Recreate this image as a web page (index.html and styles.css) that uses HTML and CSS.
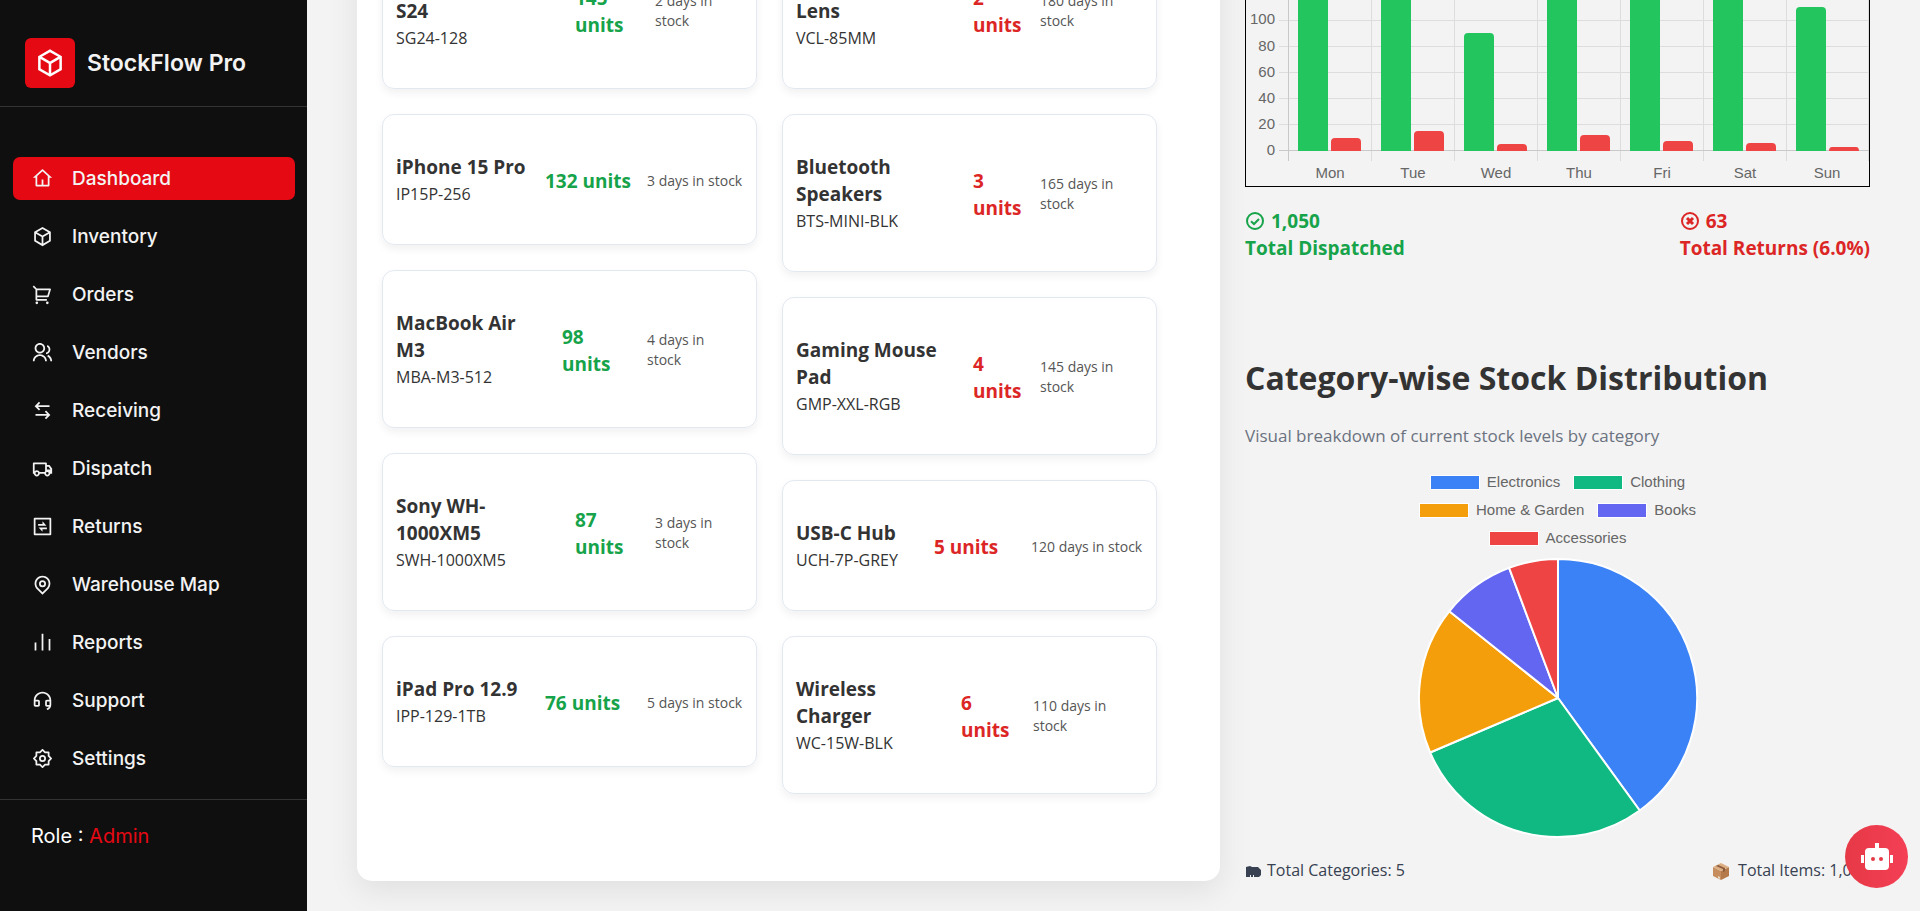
FILE: index.html
```html
<!DOCTYPE html>
<html lang="en">
<head>
<meta charset="utf-8">
<title>StockFlow Pro</title>
<link rel="stylesheet" href="styles.css">
</head>
<body>
<div class="app">
  <aside class="sidebar">
    <div class="brand">
      <span class="brand-mark"><svg class="brand-icon" viewBox="0 0 24 24"><path d="M12 1L21.5 6.5V17.5L12 23L2.5 17.5V6.5L12 1ZM5.494 7.078L12 10.844L18.506 7.078L12 3.311L5.494 7.078ZM4.5 8.813V16.347L11 20.11V12.577L4.5 8.813ZM13 20.11L19.5 16.347V8.813L13 12.577V20.11Z"/></svg></span>
      <span class="brand-name">StockFlow Pro</span>
    </div>
    <nav class="nav">
      <a class="nav-item active" href="#"><svg class="nav-icon" viewBox="0 0 24 24"><path d="M19 21H5C4.448 21 4 20.552 4 20V11H1L11.327 1.612C11.709 1.265 12.291 1.265 12.673 1.612L23 11H20V20C20 20.552 19.552 21 19 21ZM13 19H18V9.157L12 3.703L6 9.157V19H11V13H13V19Z"/></svg>Dashboard</a>
      <a class="nav-item" href="#"><svg class="nav-icon" viewBox="0 0 24 24"><path d="M12 1L21.5 6.5V17.5L12 23L2.5 17.5V6.5L12 1ZM5.494 7.078L12 10.844L18.506 7.078L12 3.311L5.494 7.078ZM4.5 8.813V16.347L11 20.11V12.577L4.5 8.813ZM13 20.11L19.5 16.347V8.813L13 12.577V20.11Z"/></svg>Inventory</a>
      <a class="nav-item" href="#"><svg class="nav-icon" viewBox="0 0 24 24"><path d="M4.004 6.417L.762 3.174L2.176 1.76L5.419 5.003H20.66C21.213 5.003 21.66 5.45 21.66 6.003C21.66 6.1 21.646 6.197 21.618 6.29L19.218 14.29C19.091 14.713 18.702 15.003 18.26 15.003H6.004V17.003H17.004V19.003H5.004C4.452 19.003 4.004 18.555 4.004 18.003V6.417ZM6.004 7.003V13.003H17.516L19.316 7.003H6.004Z"/><circle cx="5.5" cy="21.5" r="1.5"/><circle cx="17.5" cy="21.5" r="1.5"/></svg>Orders</a>
      <a class="nav-item" href="#"><svg class="nav-icon" viewBox="0 0 24 24"><path d="M1 22C1 17.582 4.582 14 9 14C13.418 14 17 17.582 17 22H15C15 18.686 12.314 16 9 16C5.686 16 3 18.686 3 22H1ZM9 13C5.685 13 3 10.315 3 7C3 3.685 5.685 1 9 1C12.315 1 15 3.685 15 7C15 10.315 12.315 13 9 13ZM9 11C11.21 11 13 9.21 13 7C13 4.79 11.21 3 9 3C6.79 3 5 4.79 5 7C5 9.21 6.79 11 9 11ZM18.284 14.703C21.064 15.956 23 18.752 23 22H21C21 19.564 19.548 17.467 17.463 16.527L18.284 14.703ZM17.596 3.413C19.594 4.237 21 6.204 21 8.5C21 11.37 18.804 13.725 16 13.978V11.965C17.697 11.722 19 10.264 19 8.5C19 7.119 18.202 5.926 17.041 5.356L17.596 3.413Z"/></svg>Vendors</a>
      <a class="nav-item" href="#"><svg class="nav-icon" viewBox="0 0 24 24"><path d="M16.05 12.05L21 17L16.05 21.95L14.636 20.535L17.172 18H4V16H17.172L14.636 13.464L16.05 12.05ZM7.95 2.05L9.364 3.464L6.828 6H20V8H6.828L9.364 10.535L7.95 11.95L3 7L7.95 2.05Z"/></svg>Receiving</a>
      <a class="nav-item" href="#"><svg class="nav-icon" viewBox="0 0 24 24"><path d="M8.965 18C8.722 19.696 7.263 21 5.5 21C3.737 21 2.278 19.696 2.035 18H1V6C1 5.448 1.448 5 2 5H16C16.552 5 17 5.448 17 6V8H20L23 12.056V18H20.965C20.722 19.696 19.263 21 17.5 21C15.737 21 14.278 19.696 14.035 18H8.965ZM15 7H3V15.05C3.635 14.402 4.521 14 5.5 14C6.896 14 8.101 14.818 8.663 16H14.337C14.505 15.647 14.73 15.326 15 15.05V7ZM17 13H21V12.715L18.992 10H17V13ZM17.5 19A1.5 1.5 0 1 0 17.5 16A1.5 1.5 0 0 0 17.5 19ZM5.5 19A1.5 1.5 0 1 0 5.5 16A1.5 1.5 0 0 0 5.5 19Z"/></svg>Dispatch</a>
      <a class="nav-item" href="#"><svg class="nav-icon" viewBox="0 0 24 24"><path d="M3 2H21C21.552 2 22 2.448 22 3V21C22 21.552 21.552 22 21 22H3C2.448 22 2 21.552 2 21V3C2 2.448 2.448 2 3 2ZM4 4V20H20V4H4ZM12 9V6L16.5 11H7V9H12ZM7.5 13H17V15H12V18L7.5 13Z"/></svg>Returns</a>
      <a class="nav-item" href="#"><svg class="nav-icon" viewBox="0 0 24 24"><path d="M12 20.9L16.95 15.95C19.683 13.216 19.683 8.784 16.95 6.05C14.216 3.317 9.784 3.317 7.05 6.05C4.317 8.784 4.317 13.216 7.05 15.95L12 20.9ZM12 23.728L5.636 17.364C2.121 13.849 2.121 8.151 5.636 4.636C9.151 1.121 14.849 1.121 18.364 4.636C21.879 8.151 21.879 13.849 18.364 17.364L12 23.728ZM12 13A2 2 0 1 0 12 9A2 2 0 0 0 12 13ZM12 15A4 4 0 1 1 12 7A4 4 0 0 1 12 15Z"/></svg>Warehouse Map</a>
      <a class="nav-item" href="#"><svg class="nav-icon" viewBox="0 0 24 24"><path d="M3 12H5V21H3V12ZM19 8H21V21H19V8ZM11 2H13V21H11V2Z"/></svg>Reports</a>
      <a class="nav-item" href="#"><svg class="nav-icon" viewBox="0 0 24 24"><path d="M22 17.002C21.999 19.873 19.982 22.273 17.287 22.862L16.649 20.948C17.853 20.751 18.877 20.017 19.466 19H17C15.895 19 15 18.105 15 17V13C15 11.895 15.895 11 17 11H19.938C19.446 7.054 16.08 4 12 4C7.92 4 4.554 7.054 4.062 11H7C8.105 11 9 11.895 9 13V17C9 18.105 8.105 19 7 19H4C2.895 19 2 18.105 2 17V12C2 6.477 6.477 2 12 2C17.523 2 22 6.477 22 12V17.002ZM20 17V13H17V17H20ZM4 13V17H7V13H4Z"/></svg>Support</a>
      <a class="nav-item" href="#"><svg class="nav-icon" viewBox="0 0 24 24"><path d="M8.686 4L11.293 1.393C11.683 1.003 12.317 1.003 12.707 1.393L15.314 4H19C19.552 4 20 4.448 20 5V8.686L22.607 11.293C22.997 11.683 22.997 12.317 22.607 12.707L20 15.314V19C20 19.552 19.552 20 19 20H15.314L12.707 22.607C12.317 22.997 11.683 22.997 11.293 22.607L8.686 20H5C4.448 20 4 19.552 4 19V15.314L1.393 12.707C1.003 12.317 1.003 11.683 1.393 11.293L4 8.686V5C4 4.448 4.448 4 5 4H8.686ZM6 6V9.515L3.515 12L6 14.485V18H9.515L12 20.485L14.485 18H18V14.485L20.485 12L18 9.515V6H14.485L12 3.515L9.515 6H6ZM12 16A4 4 0 1 1 12 8A4 4 0 0 1 12 16ZM12 14A2 2 0 1 0 12 10A2 2 0 0 0 12 14Z"/></svg>Settings</a>
    </nav>
    <div class="role">Role : <span class="role-name">Admin</span></div>
  </aside>

  <main class="main">
    <div class="content">
      <section class="panel">
        <div class="stock-list fast">
          <article class="item split-wide"><div><h3>Samsung<br>S24</h3><p class="sku">SG24-128</p></div><p class="units">145<br>units</p><p class="days">2 days in<br>stock</p></article>
          <article class="item split-name"><div><h3>iPhone 15 Pro</h3><p class="sku">IP15P-256</p></div><p class="units">132 units</p><p class="days">3 days in stock</p></article>
          <article class="item split-mid"><div><h3>MacBook Air<br>M3</h3><p class="sku">MBA-M3-512</p></div><p class="units">98<br>units</p><p class="days">4 days in<br>stock</p></article>
          <article class="item split-wide"><div><h3>Sony WH-<br>1000XM5</h3><p class="sku">SWH-1000XM5</p></div><p class="units">87<br>units</p><p class="days">3 days in<br>stock</p></article>
          <article class="item split-name"><div><h3>iPad Pro 12.9</h3><p class="sku">IPP-129-1TB</p></div><p class="units">76 units</p><p class="days">5 days in stock</p></article>
        </div>
        <div class="stock-list slow">
          <article class="item split-wide"><div><h3>Camera<br>Lens</h3><p class="sku">VCL-85MM</p></div><p class="units">2<br>units</p><p class="days">180 days in<br>stock</p></article>
          <article class="item split-wide"><div><h3>Bluetooth<br>Speakers</h3><p class="sku">BTS-MINI-BLK</p></div><p class="units">3<br>units</p><p class="days">165 days in<br>stock</p></article>
          <article class="item split-wide"><div><h3>Gaming Mouse<br>Pad</h3><p class="sku">GMP-XXL-RGB</p></div><p class="units">4<br>units</p><p class="days">145 days in<br>stock</p></article>
          <article class="item split-name"><div><h3>USB-C Hub</h3><p class="sku">UCH-7P-GREY</p></div><p class="units">5 units</p><p class="days">120 days in stock</p></article>
          <article class="item split-mid"><div><h3>Wireless<br>Charger</h3><p class="sku">WC-15W-BLK</p></div><p class="units">6<br>units</p><p class="days">110 days in<br>stock</p></article>
        </div>
      </section>

      <section class="insights">
        <svg class="bar-chart" viewBox="0 0 625 312" role="img" aria-label="Dispatched and returned items per day">
          <g class="grid-lines">
            <path d="M34 15.5H624M34 41.5H624M34 67.5H624M34 93.5H624M34 119.5H624M34 145.5H624M34 171.5H624M34 197.5H624M34 223.5H624M34 249.5H624"/>
            <path d="M126.5 15V286M209.5 15V286M292.5 15V286M375.5 15V286M458.5 15V286M541.5 15V286M623.5 15V286"/>
          </g>
          <path class="axis-lines" d="M34 275.5H624M43.5 15V286"/>
          <g class="bar-out">
            <path d="M53 276V80q0-4 4-4h22q4 0 4 4V276zM136 276V60q0-4 4-4h22q4 0 4 4V276zM219 276V162q0-4 4-4h22q4 0 4 4V276zM302 276V50q0-4 4-4h22q4 0 4 4V276zM385 276V40q0-4 4-4h22q4 0 4 4V276zM468 276V70q0-4 4-4h22q4 0 4 4V276zM551 276V136q0-4 4-4h22q4 0 4 4V276z"/>
          </g>
          <g class="bar-back">
            <path d="M86 276V267q0-4 4-4h22q4 0 4 4V276zM169 276V260q0-4 4-4h22q4 0 4 4V276zM252 276V273q0-4 4-4h22q4 0 4 4V276zM335 276V264q0-4 4-4h22q4 0 4 4V276zM418 276V270q0-4 4-4h22q4 0 4 4V276zM501 276V272q0-4 4-4h22q4 0 4 4V276zM584 276q0-4 3-4h24q3 0 3 4z"/>
          </g>
          <g class="chart-text tick-y">
            <text x="30" y="149">100</text><text x="30" y="176">80</text><text x="30" y="202">60</text><text x="30" y="228">40</text><text x="30" y="254">20</text><text x="30" y="280">0</text>
          </g>
          <g class="chart-text tick-x">
            <text x="85" y="303">Mon</text><text x="168" y="303">Tue</text><text x="251" y="303">Wed</text><text x="334" y="303">Thu</text><text x="417" y="303">Fri</text><text x="500" y="303">Sat</text><text x="582" y="303">Sun</text>
          </g>
          <rect class="frame" x="0.5" y="0.5" width="624" height="311"/>
        </svg>

        <div class="totals">
          <p class="total good"><svg class="total-icon" viewBox="0 0 20 20"><circle cx="10" cy="10" r="8"/><path d="M6 10.2L9 13L14 8"/></svg>1,050<br>Total Dispatched</p>
          <p class="total bad"><svg class="total-icon" viewBox="0 0 20 20"><circle cx="10" cy="10" r="8"/><path class="cross" d="M7 7L13 13M13 7L7 13"/></svg>63<br>Total Returns (6.0%)</p>
        </div>

        <h2 class="section-title">Category-wise Stock Distribution</h2>
        <p class="section-note">Visual breakdown of current stock levels by category</p>

        <ul class="legend">
          <li><span class="swatch electronics"></span>Electronics</li>
          <li><span class="swatch clothing"></span>Clothing</li>
          <li><span class="swatch home"></span>Home &amp; Garden</li>
          <li><span class="swatch books"></span>Books</li>
          <li><span class="swatch accessories"></span>Accessories</li>
        </ul>
        <svg class="pie" viewBox="-140 -140 280 280" role="img" aria-label="Stock by category">
          <path class="electronics" d="M0 0V-139A139 139 0 0 1 81.7 112.5Z"/>
          <path class="clothing" d="M0 0L81.7 112.5A139 139 0 0 1 -127.9 54.5Z"/>
          <path class="home" d="M0 0L-127.9 54.5A139 139 0 0 1 -108.7 -86.7Z"/>
          <path class="books" d="M0 0L-108.7 -86.7A139 139 0 0 1 -48.9 -130.1Z"/>
          <path class="accessories" d="M0 0L-48.9 -130.1A139 139 0 0 1 0 -139Z"/>
        </svg>
        <div class="summary">
          <p><svg class="summary-icon" viewBox="0 0 18 18"><path fill="#374151" d="M1 5L5 4L7 5H13L16 8V13L14 15H1Z"/><path fill="#f3f3f3" d="M5 13h1v2H5zM8 13h1v2H8z"/></svg>Total Categories: 5</p>
          <p><svg class="summary-icon" viewBox="0 0 18 18"><path fill="#c68e5f" d="M1 5L9 9V18L1 14Z"/><path fill="#b57a4a" d="M9 9L17 5V14L9 18Z"/><path fill="#dcae82" d="M1 5L9 1L17 5L9 9Z"/><path fill="#8a5a3c" d="M4 4L6 3L13 6V9L11 10V7Z"/><path fill="#e8dccb" d="M6 14L8 15V17L6 16Z"/></svg> Total Items: 1,050</p>
        </div>
      </section>
    </div>
  </main>

  <button class="chat" type="button" aria-label="Open assistant"><svg class="chat-icon" viewBox="0 0 32 28"><rect x="14" y="0" width="4" height="7"/><rect x="4" y="5" width="24" height="22" rx="4"/><rect x="0" y="12" width="3" height="8"/><rect x="29" y="12" width="3" height="8"/><circle class="eye" cx="12" cy="16" r="2"/><circle class="eye" cx="20" cy="16" r="2"/></svg></button>
</div>
</body>
</html>
```
FILE: styles.css
```css
* { box-sizing: border-box; margin: 0; padding: 0; }

body {
  background: #f3f3f3;
  color: #333;
  font-family: "Open Sans", "Noto Sans", sans-serif;
}

.app { display: flex; height: 100vh; overflow: hidden; }

/* Sidebar */
.sidebar {
  flex: none;
  width: 307px;
  background: #0f0f0f;
  color: #fff;
  font-family: Inter, sans-serif;
}
.brand {
  display: flex;
  align-items: center;
  gap: 12px;
  padding: 38px 25px 18px;
  border-bottom: 1px solid #333;
}
.brand-mark {
  display: grid;
  place-items: center;
  width: 50px;
  height: 50px;
  border-radius: 6px;
  background: #e50914;
}
.brand-icon { width: 30px; height: 30px; fill: #fff; }
.brand-name { color: #f3f3f3; font-size: 23px; font-weight: 600; }
.nav {
  display: flex;
  flex-direction: column;
  gap: 15px;
  padding: 50px 12px 19px 13px;
}
.nav-item {
  display: flex;
  align-items: center;
  gap: 19px;
  height: 43px;
  padding: 0 19px;
  border-radius: 7px;
  color: #f3f3f3;
  font-size: 19px;
  font-weight: 500;
  text-decoration: none;
}
.nav-item.active { background: #e50914; }
.nav-icon { width: 21px; height: 21px; fill: currentColor; }
.role {
  padding: 24px 31px;
  border-top: 1px solid #333;
  font-size: 20px;
  line-height: 24px;
}
.role-name { color: #e50914; }

/* Scrolled content */
.main { flex: 1; min-width: 0; overflow: hidden; }
.content {
  display: grid;
  grid-template-columns: 863fr 625fr;
  gap: 25px;
  align-items: start;
  margin-top: -125px;
  padding: 0 50px;
}

.panel {
  display: grid;
  grid-template-columns: 1fr 1fr;
  gap: 25px;
  align-items: start;
  padding: 56px 63px 87px 25px;
  border-radius: 15px;
  background: #fff;
  box-shadow: 0 10px 30px rgba(0, 0, 0, 0.08);
}
.stock-list { display: grid; gap: 25px; }
.item {
  display: grid;
  align-items: center;
  padding: 39px 0 37px 13px;
  border: 1px solid #e2e8f0;
  border-radius: 12px;
  box-shadow: 0 4px 8px rgba(0, 0, 0, 0.06);
}
.item h3 { font-size: 19px; font-weight: 700; line-height: 27px; }
.sku { font-size: 16px; line-height: 26px; }
.units { padding-top: 1px; font-size: 19px; font-weight: 700; line-height: 27px; }
.days { color: #555; font-size: 14px; line-height: 20px; }
.fast .units { color: #16a34a; }
.slow .units { color: #dc2626; }
.fast .split-wide { grid-template-columns: 179px 80px 1fr; }
.fast .split-mid { grid-template-columns: 166px 85px 1fr; }
.fast .split-name { grid-template-columns: 149px 102px 1fr; }
.slow .split-wide { grid-template-columns: 177px 67px 1fr; }
.slow .split-mid { grid-template-columns: 165px 72px 1fr; }
.slow .split-name { grid-template-columns: 138px 97px 1fr; }

/* Charts */
.bar-chart { display: block; width: 100%; }
.grid-lines { stroke: #dddddd; fill: none; }
.axis-lines { stroke: #c9c9c9; fill: none; }
.bar-out { fill: #22c55e; }
.bar-back { fill: #ef4444; }
.frame { fill: none; stroke: #000; }
.chart-text { fill: #666; font: 15px "Liberation Sans", Arial, sans-serif; }
.tick-y { text-anchor: end; }
.tick-x { text-anchor: middle; }

.totals {
  display: flex;
  justify-content: space-between;
  margin-top: 21px;
}
.total { font-size: 19px; font-weight: 700; line-height: 27px; }
.good { color: #16a34a; }
.bad { color: #dc2626; }
.total-icon {
  width: 20px;
  height: 20px;
  margin-right: 6px;
  vertical-align: -3px;
  fill: none;
  stroke: currentColor;
  stroke-width: 2;
}
.cross { stroke-width: 3; }

.section-title { margin-top: 95px; font-size: 32px; font-weight: 700; line-height: 42px; }
.section-note { margin-top: 24px; color: #6b7280; font-size: 17px; line-height: 26px; }

.legend {
  display: flex;
  flex-wrap: wrap;
  justify-content: center;
  gap: 4px 13px;
  width: 300px;
  margin: 21px auto 0;
  list-style: none;
  color: #666;
  font: 15px/24px "Liberation Sans", Arial, sans-serif;
}
.legend li { display: flex; align-items: center; gap: 7px; }
.swatch { width: 50px; height: 15px; border: 1px solid #fff; }
.electronics { background: #3b82f6; fill: #3b82f6; }
.clothing { background: #10b981; fill: #10b981; }
.home { background: #f59e0b; fill: #f59e0b; }
.books { background: #6366f1; fill: #6366f1; }
.accessories { background: #ef4444; fill: #ef4444; }
.pie { display: block; width: 280px; margin: 8px auto 0; stroke: #fff; stroke-width: 2; stroke-linejoin: round; }
.pie path { background: none; }

.summary {
  display: flex;
  justify-content: space-between;
  margin-top: 19px;
  color: #374151;
  font-size: 16px;
  line-height: 26px;
}
.summary-icon { width: 18px; height: 18px; margin-right: 4px; vertical-align: -4px; }

.chat {
  position: fixed;
  right: 12px;
  bottom: 23px;
  display: grid;
  place-items: center;
  width: 63px;
  height: 63px;
  border: 0;
  border-radius: 50%;
  background: linear-gradient(90deg, #e63946, #f43f55);
}
.chat-icon { width: 32px; height: 28px; fill: #fff; }
.eye { fill: #e63946; }
```
